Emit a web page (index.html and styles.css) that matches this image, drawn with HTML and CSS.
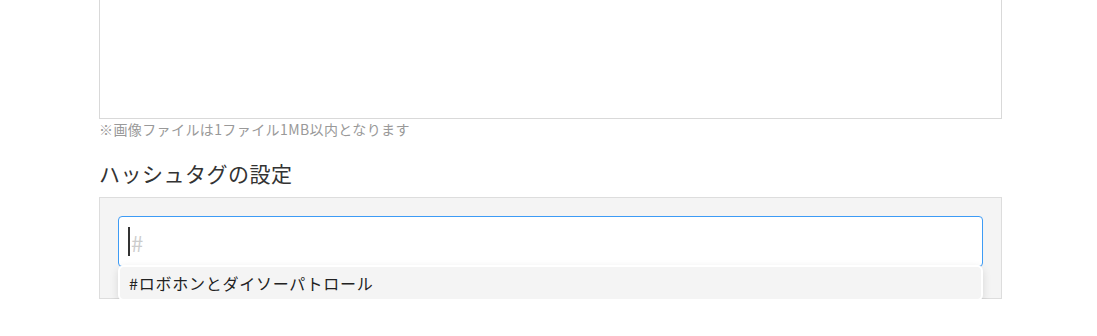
FILE: index.html
```html
<!DOCTYPE html>
<html lang="ja">
<head>
    <meta charset="UTF-8">
    <meta name="viewport" content="width=device-width, initial-scale=1.0">
    <title>ハッシュタグの設定</title>
    <link rel="stylesheet" href="styles.css">
</head>
<body>
    <div class="form-wrap">
        <div class="image-box"></div>
        <p class="note">※画像ファイルは1ファイル1MB以内となります</p>

        <h2 class="section-title">ハッシュタグの設定</h2>
        <div class="tag-panel">
            <div class="tag-input">
                <span class="caret"></span>
                <span class="placeholder">#</span>
            </div>
            <ul class="suggest">
                <li>#ロボホンとダイソーパトロール</li>
            </ul>
        </div>
    </div>
</body>
</html>
```

FILE: styles.css
```css
body {
    margin: 0;
    padding: 0;
    background-color: #fff;
    color: #333;
    font-family: "Noto Sans CJK JP", "Noto Sans", sans-serif;
}

.form-wrap {
    width: 903px;
    margin-left: 99px;
}

.image-box {
    height: 119px;
    border: 1px solid #d9d9d9;
    border-top: none;
    box-sizing: border-box;
}

.note {
    font-size: 14px;
    letter-spacing: 0.4px;
    color: #999;
    margin: 0;
    line-height: 20px;
}

.section-title {
    font-size: 21px;
    letter-spacing: 0.5px;
    font-weight: normal;
    color: #333;
    margin: 19px 0 0;
    line-height: 30px;
}

.tag-panel {
    position: relative;
    margin-top: 9px;
    background-color: #f4f4f4;
    border: 1px solid #ddd;
    padding: 18px 18px 31px;
}

.tag-input {
    display: flex;
    align-items: center;
    height: 49px;
    background-color: #fff;
    border: 1px solid #3d9bf5;
    border-radius: 4px;
    padding-left: 9px;
}

.caret {
    width: 2px;
    height: 29px;
    background-color: #333;
}

.placeholder {
    font-size: 22px;
    color: #ccc;
    margin-left: 1px;
}

.suggest {
    position: absolute;
    left: 18px;
    right: 18px;
    top: 67px;
    z-index: 10;
    margin: 0;
    padding: 0;
    list-style: none;
    background-color: #f4f4f4;
    border: 2px solid #fff;
    border-radius: 6px;
    box-shadow: 0 3px 8px rgba(0, 0, 0, 0.12);
}

.suggest li {
    font-size: 16px;
    letter-spacing: 0.75px;
    color: #222;
    line-height: 32px;
    padding-left: 9px;
}
```
